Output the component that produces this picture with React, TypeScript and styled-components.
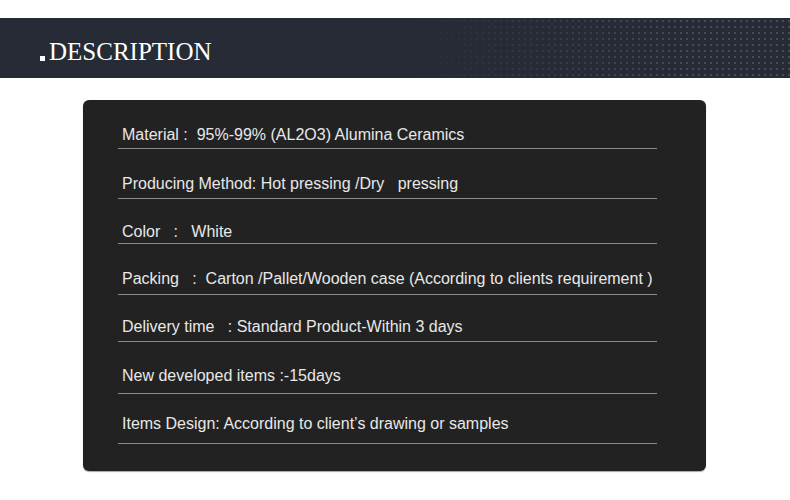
import styled, { createGlobalStyle } from "styled-components";

const GlobalStyle = createGlobalStyle`
  body {
    margin: 0;
    background: #ffffff;
    font-family: "Liberation Sans", Arial, sans-serif;
  }
`;

interface Spec {
  text: string;
  top: number;
  bottom: number;
}

const specs: Spec[] = [
  { text: "Material :  95%-99% (AL2O3) Alumina Ceramics", top: 10, bottom: 4 },
  { text: "Producing Method: Hot pressing /Dry   pressing", top: 26, bottom: 5 },
  { text: "Color   :   White", top: 24, bottom: 2 },
  {
    text: "Packing   :  Carton /Pallet/Wooden case (According to clients requirement )",
    top: 26,
    bottom: 6,
  },
  { text: "Delivery time   : Standard Product-Within 3 days", top: 23, bottom: 5 },
  { text: "New developed items :-15days", top: 25, bottom: 8 },
  { text: "Items Design: According to client’s drawing or samples", top: 21, bottom: 10 },
];

export default function App() {
  return (
    <>
      <GlobalStyle />
      <Page>
        <Banner>
          <Title>
            <Bullet />
            DESCRIPTION
          </Title>
        </Banner>
        <Card>
          <SpecList>
            {specs.map((s) => (
              <SpecRow key={s.text} $top={s.top} $bottom={s.bottom}>
                {s.text}
              </SpecRow>
            ))}
          </SpecList>
        </Card>
      </Page>
    </>
  );
}

const Page = styled.div`
  width: 790px;
  height: 500px;
  padding-top: 18px;
  box-sizing: border-box;
  overflow: hidden;
`;

const Banner = styled.header`
  position: relative;
  height: 60px;
  background-color: #262b35;
  display: flex;
  align-items: center;
  padding-left: 40px;
  padding-top: 8px;
  box-sizing: border-box;
  overflow: hidden;

  &::after {
    content: "";
    position: absolute;
    inset: 0;
    background-image: radial-gradient(
      circle,
      rgba(190, 200, 215, 0.22) 0.7px,
      transparent 1.1px
    );
    background-size: 6px 6px;
    -webkit-mask-image: linear-gradient(to right, transparent 52%, #000 88%);
    mask-image: linear-gradient(to right, transparent 52%, #000 88%);
    pointer-events: none;
  }
`;

const Title = styled.h1`
  position: relative;
  z-index: 1;
  margin: 0;
  display: flex;
  align-items: baseline;
  color: #ffffff;
  font-family: "Liberation Serif", "Times New Roman", serif;
  font-size: 25px;
  font-weight: normal;
  line-height: 30px;
`;

const Bullet = styled.span`
  display: inline-block;
  width: 5px;
  height: 5px;
  background: #ffffff;
  margin-right: 4px;
  position: relative;
  top: 1px;
`;

const Card = styled.section`
  width: 623px;
  height: 371px;
  margin: 22px 0 0 83px;
  background-color: #222222;
  border-radius: 6px;
  box-shadow: 0 1px 1px rgba(0, 0, 0, 0.35);
  padding: 16px 49px 0 35px;
  box-sizing: border-box;
`;

const SpecList = styled.ul`
  list-style: none;
  margin: 0;
  padding: 0;
`;

const SpecRow = styled.li<{ $top: number; $bottom: number }>`
  padding: ${(p) => p.$top}px 0 ${(p) => p.$bottom}px 4px;
  border-bottom: 1px solid #8c8c8c;
  color: #e8e8e8;
  font-size: 16px;
  line-height: 18px;
  white-space: pre;
`;
